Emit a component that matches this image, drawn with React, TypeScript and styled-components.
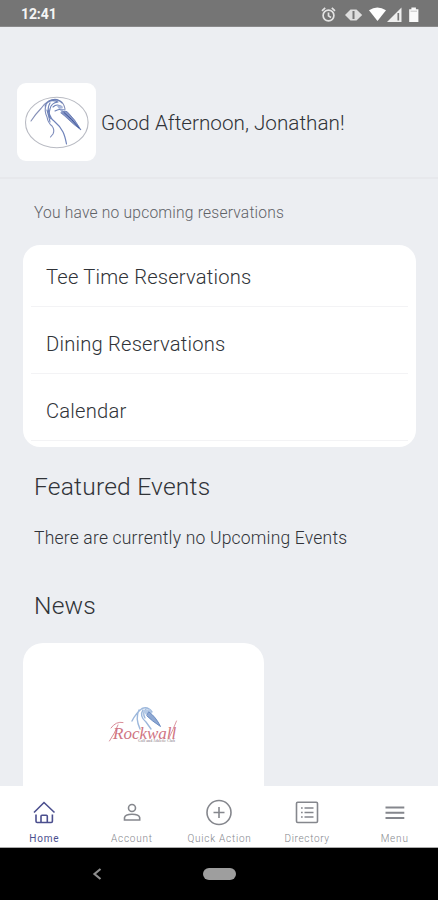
import React from "react";
import styled, { createGlobalStyle } from "styled-components";

const GlobalStyle = createGlobalStyle`
  *, *::before, *::after { box-sizing: border-box; }
  html, body { margin: 0; padding: 0; background: #eceef2; }
  body { font-family: Roboto, "Liberation Sans", sans-serif; }
`;

const Screen = styled.div`
  display: flex;
  flex-direction: column;
  width: 438px;
  height: 900px;
  overflow: hidden;
  background: #eceef2;
`;

const StatusBar = styled.header`
  display: flex;
  flex: none;
  align-items: center;
  justify-content: space-between;
  height: 27px;
  padding: 2px 17px 0 21px;
  background: #757575;
  border-bottom: 1px solid #8a8a8b;
`;

const Clock = styled.span`
  color: #f5f5f5;
  font-size: 14px;
  font-weight: 700;
  line-height: 16px;
  letter-spacing: -0.1px;
`;

const StatusIcons = styled.svg`
  display: block;
  width: 101px;
  height: 18px;
`;

const Greeting = styled.section`
  display: flex;
  flex: none;
  align-items: flex-start;
  gap: 5px;
  height: 152px;
  padding: 56px 0 0 17px;
  border-bottom: 2px solid #e7e8ec;
`;

const LogoTile = styled.div`
  width: 79px;
  height: 78px;
  background: #fff;
  border-radius: 9px;
`;

type TextProps = { $size: number; $line: number; $color?: string; $track?: number; $weight?: number };

const Text = styled.p<TextProps>`
  margin: 0;
  font-size: ${(p) => p.$size}px;
  font-weight: ${(p) => p.$weight ?? 300};
  line-height: ${(p) => p.$line}px;
  letter-spacing: ${(p) => p.$track ?? 0}px;
  color: ${(p) => p.$color ?? "#303338"};
  white-space: nowrap;
`;

const Heading = styled(Text).attrs({ as: "h2" })``;

const Content = styled.main`
  display: flex;
  flex: 1;
  flex-direction: column;
  min-height: 0;
  overflow: hidden;
`;

const Notice = styled.div`
  flex: none;
  padding: 24px 0 0 34px;
  height: 66px;
`;

const LinkCard = styled.nav`
  flex: none;
  width: 393px;
  height: 202px;
  margin-left: 23px;
  padding: 0 8px;
  background: #fff;
  border-radius: 17px;
`;

const LinkRow = styled.div<{ $first?: boolean }>`
  display: flex;
  align-items: center;
  height: ${(p) => (p.$first ? 62 : 67)}px;
  padding: ${(p) => (p.$first ? 2 : 7)}px 0 0 15px;
  border-bottom: 1px solid #f3f3f5;
`;

const Section = styled.section<{ $top: number }>`
  flex: none;
  padding: ${(p) => p.$top}px 0 0 34px;
`;

const EventsNote = styled.div`
  padding-top: 25px;
`;

const NewsCard = styled.article`
  display: flex;
  flex: none;
  justify-content: center;
  width: 241px;
  height: 200px;
  margin: 21px 0 0 23px;
  padding-top: 58px;
  background: #fff;
  border-radius: 20px;
`;

const TabBar = styled.nav`
  display: grid;
  flex: none;
  grid-template-columns: repeat(5, 1fr);
  height: 62px;
  background: #fff;
  border-bottom: 1px solid #aaa;
`;

const Tab = styled.div<{ $active?: boolean }>`
  display: flex;
  flex-direction: column;
  align-items: center;
  gap: 5px;
  padding: 12px 0 0 1px;
  color: ${(p) => (p.$active ? "#4b4f8e" : "#85878d")};
`;

const TabIcon = styled.svg`
  display: block;
  width: 28px;
  height: 28px;
  fill: none;
  stroke: currentColor;
  stroke-width: 1.6;
`;

const TabLabel = styled.span<{ $track: number; $active?: boolean }>`
  font-size: 10px;
  font-weight: ${(p) => (p.$active ? 400 : 300)};
  line-height: 16px;
  letter-spacing: ${(p) => p.$track}px;
  white-space: nowrap;
`;

const SystemBar = styled.footer`
  display: grid;
  flex: none;
  grid-template-columns: 1fr 33px 1fr;
  align-items: center;
  height: 52px;
  background: #000;
`;

const BackIcon = styled.svg`
  display: block;
  width: 12px;
  height: 14px;
  margin-left: 91px;
`;

const HomePill = styled.div`
  height: 12px;
  background: #9e9e9e;
  border-radius: 6px;
`;

function StatusGlyphs() {
  return (
    <StatusIcons viewBox="320 4 101 18" fill="none">
      <g stroke="#e3e3e3" strokeWidth="1.7">
        <circle cx="328.5" cy="14.5" r="5.4" />
        <path d="M328.5 11.5v3.4l2.5 1.6M322 9.8l3.2-2.9M335 9.8l-3.2-2.9" />
      </g>
      <path d="M350.5 8.500h6l5.700 5.500-5.700 5.500h-6L345 14z" fill="#dedede" />
      <path d="M353.500 10v8" stroke="#777" strokeWidth="2" />
      <path d="M369 9.200Q377.300 3.800 386 9.200L377.500 20z" fill="#fff" />
      <path d="M387 21L401.500 6.500V21z" fill="#eee" />
      <path d="M398.300 12v7.500" stroke="#777" strokeWidth="1.7" />
      <path d="M409.200 8.200h2.200V6.500h4.500v1.700h2.500V21h-9.200z" fill="#fafafa" />
      <path d="M410.500 10.200h6.500" stroke="#c4c4c4" strokeWidth="1" />
    </StatusIcons>
  );
}

function HeronLogo() {
  return (
    <svg width="79" height="78" viewBox="17 83 79 78" fill="none" strokeLinecap="round" strokeLinejoin="round">
      <ellipse cx="56.8" cy="122.5" rx="31.3" ry="25.3" stroke="#b9bbc3" strokeWidth="1.1" />
      <path d="M31 121Q36 113.500 41 108.500Q44 104 48 101.500Q53 98.500 60 101Q64 103 65 109" stroke="#8791b8" strokeWidth="1.1" />
      <path d="M46 105Q44 111 47 117Q48 123 52 126Q55 130 53 134L50.500 137" stroke="#7c8bbb" strokeWidth="1.1" />
      <path d="M50 103Q47 108 49 113Q51 119 54 121Q60 126 63 132Q65 136 66.500 144" stroke="#6f83ba" strokeWidth="1.2" />
      <path d="M45 106Q49 98 58 102Q51 103 50 109Q48 115 51 119M47 110Q49 117 50 122M49 101Q57 97 62 103M53 107Q57 103 62 107M55 111Q60 108 65 110" stroke="#6c80b7" strokeWidth="1.1" />
      <path d="M57 106l4-1 2 3-4 1zM60 110l4-1-2 4z" fill="#a9b7da" />
      <path d="M63 111.500L67 111.500Q75 119 81 130Q73 124 69 120Q65 116 61 113z" fill="#8494c4" stroke="#5b71ad" strokeWidth=".7" />
      <path d="M64 112.500Q72 119 79 128" stroke="#3e569c" strokeWidth="1" />
    </svg>
  );
}

const ScriptWord = styled.text`
  font-family: "Liberation Serif", serif;
  font-size: 17px;
  font-style: italic;
  fill: #cf7482;
`;

const LogoCaption = styled.text`
  font-family: "Liberation Serif", serif;
  font-size: 3.6px;
  font-weight: 700;
  letter-spacing: 0.1px;
  fill: #a8a0a5;
`;

const LogoDrawing = styled.svg`
  display: block;
  flex: none;
  overflow: visible;
`;

function RockwallLogo() {
  return (
    <LogoDrawing width="76" height="60" viewBox="105 702 76 60" fill="none" strokeLinecap="round">
      <path d="M131 722Q135 714 141 709.500Q147 707 151 713M138 711Q134 719 139 730M142 711Q138 717 145 723L150 730M145 710Q141 714 144 719" stroke="#9db8dc" strokeWidth="1.4" />
      <path d="M142 711l7-1 2 4-6 2z" fill="#b4c9e6" />
      <path d="M148 713Q155 718 159.500 727.500Q151 722 146 717z" fill="#8fa9d3" stroke="#6c8dc3" />
      <path d="M108.500 742Q114 734 117 726M110 729Q115 722 122 723.500" stroke="#d98c98" strokeWidth="1" />
      <ScriptWord x="112" y="739.5">Rockwall</ScriptWord>
      <path d="M168 739Q172 731 175.500 722" stroke="#dd98a2" strokeWidth="1" />
      <LogoCaption x="137" y="743.2">Golf and Athletic Club</LogoCaption>
    </LogoDrawing>
  );
}

const tabs = [
  {
    label: "Home",
    track: 0.8,
    icon: (
      <>
        <path d="M4 14.500L14 4.500L24.500 14.500" />
        <path d="M6 16.500v6.800q0 1.200 1.200 1.200h14q1.200 0 1.200-1.200v-6.800M11 24.500v-6.300q0-1 1-1h4.300q1 0 1 1v6.300" />
      </>
    ),
  },
  {
    label: "Account",
    track: 0.8,
    icon: (
      <>
        <circle cx="14" cy="10" r="3.5" />
        <path d="M6.500 22v-2.300C7 17 11 16.200 14 16.200s7.200.8 7.700 3.500V22z" />
      </>
    ),
  },
  {
    label: "Quick Action",
    track: 0.75,
    icon: (
      <>
        <circle cx="14" cy="14.5" r="12" />
        <path d="M14 9v11M8.500 14.500h11" />
      </>
    ),
  },
  {
    label: "Directory",
    track: 0.65,
    icon: (
      <>
        <rect x="3.5" y="4.2" width="21" height="20.3" rx="1.2" />
        <path d="M8 10h1.700M11.500 10h9M8 14.500h1.700M11.500 14.500h9M8 19h1.700M11.500 19h9" />
      </>
    ),
  },
  {
    label: "Menu",
    track: 0.8,
    icon: <path d="M4.500 9.500h18.800M4.500 14.700h18.800M4.500 20h18.800" strokeWidth="1.9" />,
  },
];

export default function App() {
  return (
    <>
      <GlobalStyle />
      <Screen>
        <StatusBar>
          <Clock>12:41</Clock>
          <StatusGlyphs />
        </StatusBar>
        <Greeting>
          <LogoTile>
            <HeronLogo />
          </LogoTile>
          <Text $size={20.7} $line={80}>Good Afternoon, Jonathan!</Text>
        </Greeting>
        <Content>
          <Notice>
            <Text $size={15.6} $line={20} $color="#5f6267" $track={0.2}>You have no upcoming reservations</Text>
          </Notice>
          <LinkCard>
            <LinkRow $first>
              <Text $size={20.2} $line={24} $track={0.2}>Tee Time Reservations</Text>
            </LinkRow>
            <LinkRow>
              <Text $size={20.2} $line={24} $track={0.2}>Dining Reservations</Text>
            </LinkRow>
            <LinkRow>
              <Text $size={20.2} $line={24} $track={0.2}>Calendar</Text>
            </LinkRow>
          </LinkCard>
          <Section $top={25}>
            <Heading $size={24.6} $line={30} $track={0.2}>Featured Events</Heading>
            <EventsNote>
              <Text $size={17.5} $line={22} $track={0.2}>There are currently no Upcoming Events</Text>
            </EventsNote>
          </Section>
          <Section $top={41}>
            <Heading $size={24.6} $line={32} $track={0.2}>News</Heading>
          </Section>
          <NewsCard>
            <RockwallLogo />
          </NewsCard>
        </Content>
        <TabBar>
          {tabs.map((tab, i) => (
            <Tab key={tab.label} $active={i === 0}>
              <TabIcon viewBox="0 0 28 28">{tab.icon}</TabIcon>
              <TabLabel $track={tab.track} $active={i === 0}>{tab.label}</TabLabel>
            </Tab>
          ))}
        </TabBar>
        <SystemBar>
          <BackIcon viewBox="0 0 12 14">
            <path d="M9.500 2L3.500 7l6 5" fill="none" stroke="#8e8e8e" strokeWidth="2.2" />
          </BackIcon>
          <HomePill />
        </SystemBar>
      </Screen>
    </>
  );
}
